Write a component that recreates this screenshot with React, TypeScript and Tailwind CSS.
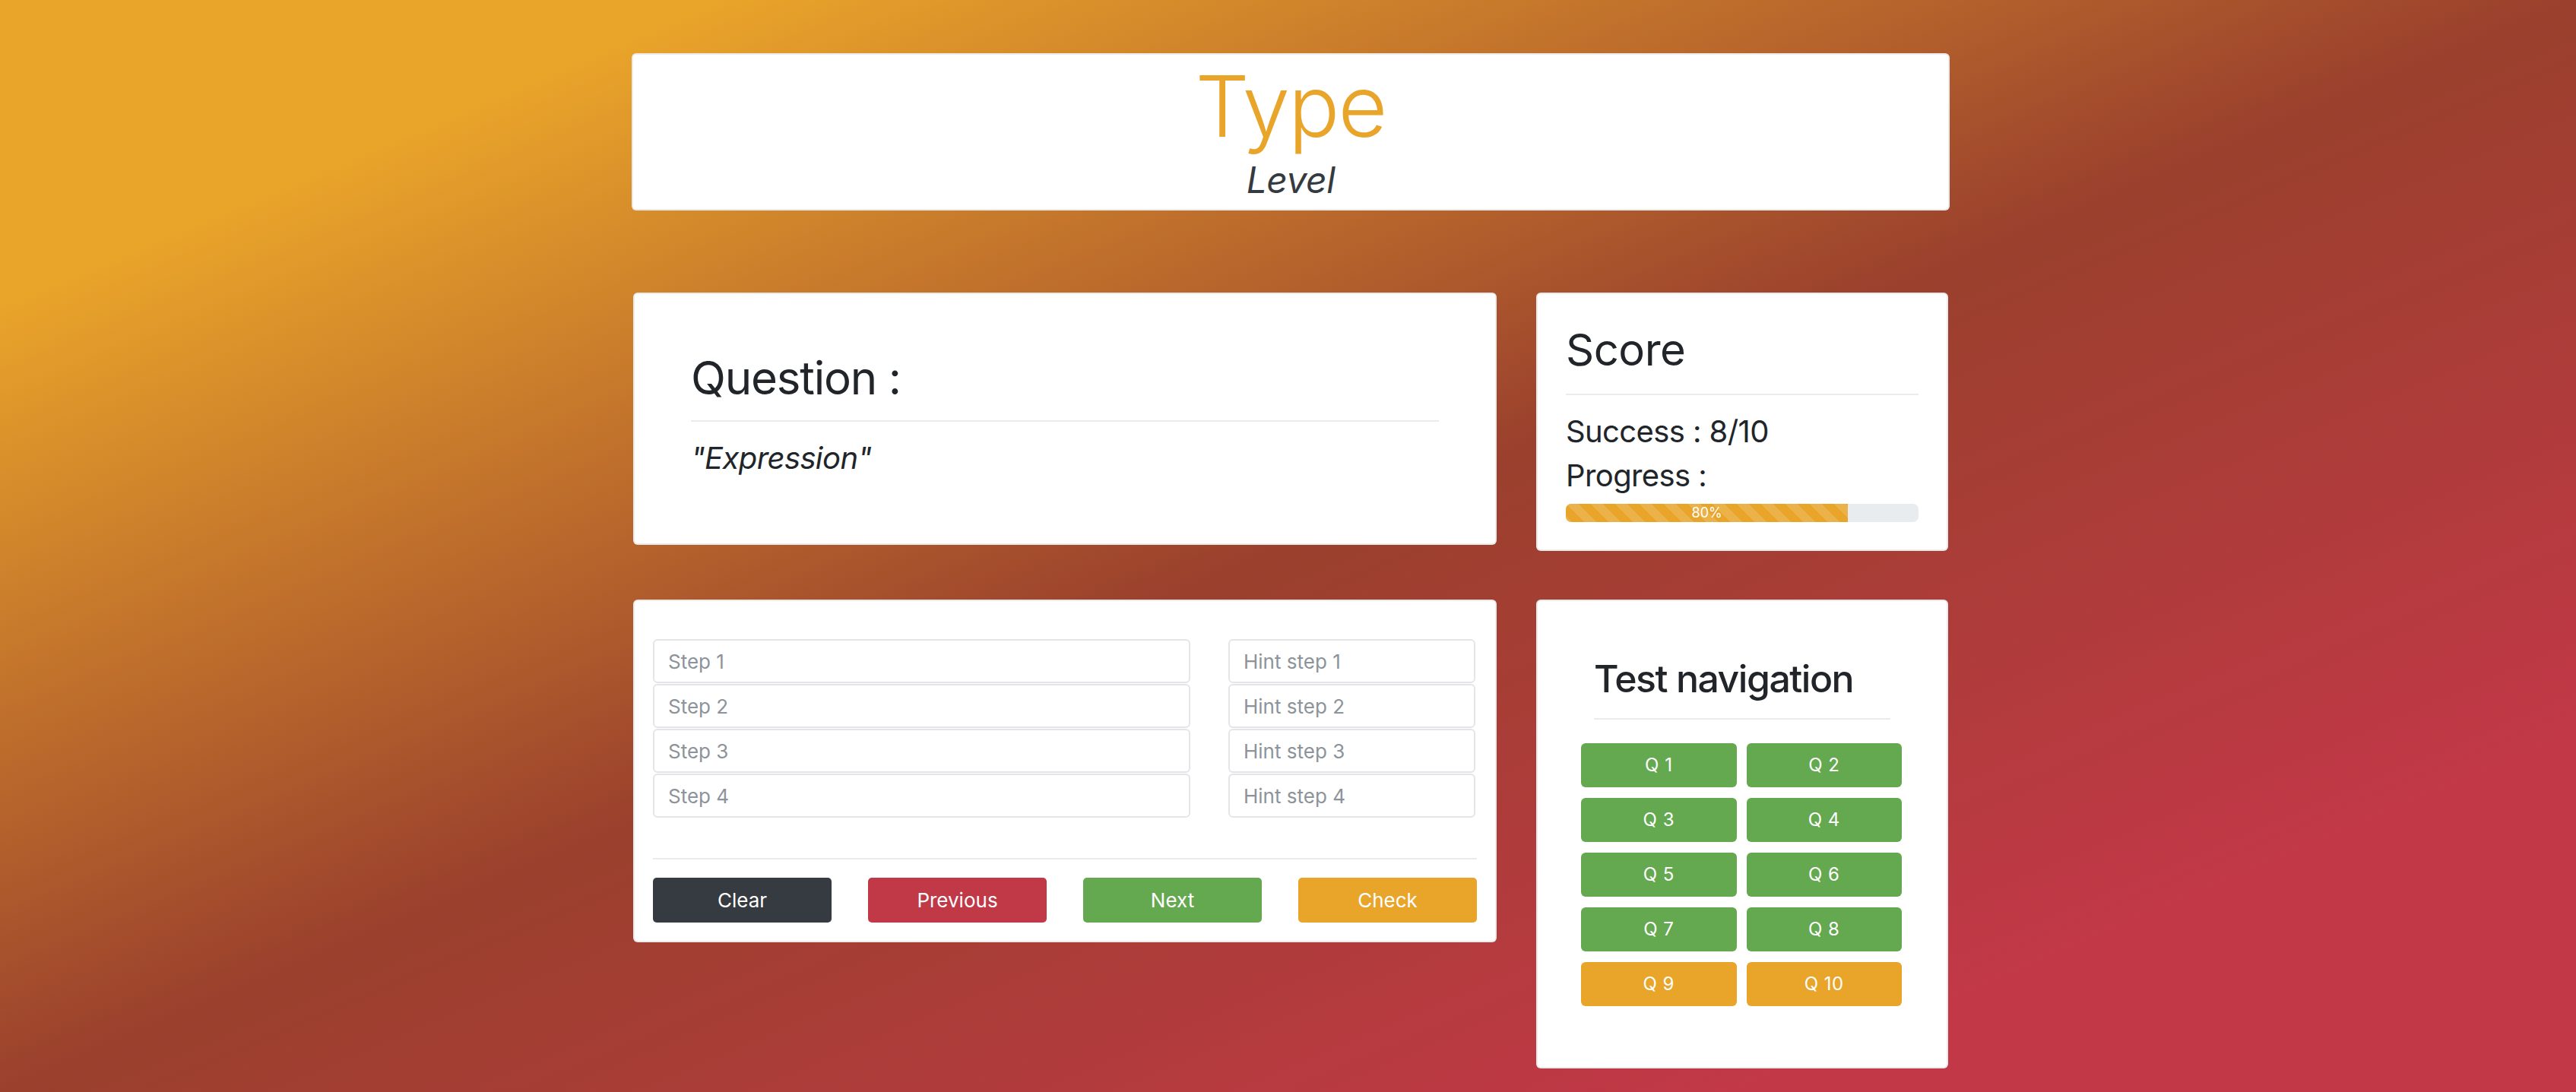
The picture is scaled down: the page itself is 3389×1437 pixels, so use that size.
const QUESTIONS = [
  { label: "Q 1", done: true },
  { label: "Q 2", done: true },
  { label: "Q 3", done: true },
  { label: "Q 4", done: true },
  { label: "Q 5", done: true },
  { label: "Q 6", done: true },
  { label: "Q 7", done: true },
  { label: "Q 8", done: true },
  { label: "Q 9", done: false },
  { label: "Q 10", done: false },
];

const STEPS = [1, 2, 3, 4];

const font = { fontFamily: "Inter, 'Noto Sans', sans-serif" };

function Card({ className, children }: { className?: string; children: React.ReactNode }) {
  return (
    <div className={"rounded-[6px] border-2 border-black/[0.08] bg-white " + (className ?? "")}>
      {children}
    </div>
  );
}

export default function App() {
  const progress = 80;

  return (
    <div
      style={font}
      className="min-h-screen w-full overflow-hidden bg-[linear-gradient(to_bottom_right,#e9a42a_14%,#9a402d_50%,#c23847_84%)] pt-[70px] text-[#212529]"
    >
      {/* Header */}
      <Card className="ml-[831px] w-[1734px] pb-[9px] text-center">
        <h1 className="text-[112px] font-light leading-[134px] tracking-[-2px] text-[#e9a42a]">Type</h1>
        <p className="mt-[2px] text-[48px] italic leading-[58px] tracking-[-0.5px] text-[#343a40]">Level</p>
      </Card>

      {/* Question + score */}
      <div className="ml-[833px] mt-[108px] flex w-[1730px] items-start gap-[52px]">
        <Card className="h-[332px] w-[1136px] px-[74px] pt-[74px]">
          <h2 className="text-[60px] leading-[72px] tracking-[-1.2px]">Question :</h2>
          <div className="mt-[20px] h-[2px] bg-[#e9ecef]" />
          <p className="mt-[18px] text-[40px] italic leading-[60px] tracking-[-0.6px]">"Expression"</p>
        </Card>

        <Card className="h-[340px] flex-1 px-[37px] pt-[38px]">
          <h3 className="text-[58px] leading-[70px] tracking-[-0.5px]">Score</h3>
          <div className="mt-[23px] h-[2px] bg-[#e9ecef]" />
          <p className="mt-[24px] text-[40px] leading-[48px] tracking-[-0.6px]">Success : 8/10</p>
          <p className="mt-[10px] text-[40px] leading-[48px] tracking-[-0.6px]">Progress :</p>
          <div className="mt-[13px] flex h-[24px] overflow-hidden rounded-[7px] bg-[#e9ecef]">
            <div
              className="flex items-center justify-center bg-[#e9a42a] bg-[linear-gradient(45deg,rgba(255,255,255,0.15)_25%,transparent_25%,transparent_50%,rgba(255,255,255,0.15)_50%,rgba(255,255,255,0.15)_75%,transparent_75%,transparent)] bg-[length:32px_32px] text-[18px] leading-none text-white"
              style={{ width: `${progress}%` }}
            >
              {progress}%
            </div>
          </div>
        </Card>
      </div>

      {/* Steps + navigation */}
      <div className="ml-[833px] mt-[64px] flex w-[1730px] items-start gap-[52px]">
        <Card className="w-[1136px] px-[24px] pb-[24px] pt-[50px]">
          <div className="grid grid-cols-[707px_minmax(0,1fr)] gap-x-[50px]">
            <div className="flex min-w-0 flex-col gap-[1px]">
              {STEPS.map((n) => (
                <input
                  key={n}
                  placeholder={`Step ${n}`}
                  className="h-[58px] w-full min-w-0 rounded-[6px] border-2 border-[#e3e5e8] px-[18px] text-[26px] outline-none placeholder:text-[#8d939a]"
                />
              ))}
            </div>
            <div className="flex min-w-0 flex-col gap-[1px] pr-[2px]">
              {STEPS.map((n) => (
                <input
                  key={n}
                  placeholder={`Hint step ${n}`}
                  className="h-[58px] w-full min-w-0 rounded-[6px] border-2 border-[#e3e5e8] px-[18px] text-[26px] outline-none placeholder:text-[#8d939a]"
                />
              ))}
            </div>
          </div>

          <div className="mt-[53px] h-[2px] bg-[#e9ecef]" />

          <div className="mt-[24px] grid grid-cols-4 gap-[48px] text-[26px] text-white">
            <button className="h-[59px] rounded-[5px] bg-[#363a41]">Clear</button>
            <button className="h-[59px] rounded-[5px] bg-[#c13847]">Previous</button>
            <button className="h-[59px] rounded-[5px] bg-[#64a84f]">Next</button>
            <button className="h-[59px] rounded-[5px] bg-[#e9a42a]">Check</button>
          </div>
        </Card>

        <Card className="flex-1 px-[57px] pb-[80px] pt-[72px]">
          <div className="px-[17px]">
            <h3 className="text-[50px] font-medium leading-[60px] tracking-[-1.5px]">Test navigation</h3>
            <div className="mt-[22px] h-[2px] bg-[#e9ecef]" />
          </div>
          <div className="mt-[31px] grid grid-cols-2 gap-x-[13px] gap-y-[14px] pr-[2px]">
            {QUESTIONS.map((q) => (
              <button
                key={q.label}
                className={
                  "h-[58px] rounded-[6px] text-[24px] tracking-[0.5px] text-white " +
                  (q.done ? "bg-[#64a84f]" : "bg-[#e9a42a]")
                }
              >
                {q.label}
              </button>
            ))}
          </div>
        </Card>
      </div>
    </div>
  );
}
